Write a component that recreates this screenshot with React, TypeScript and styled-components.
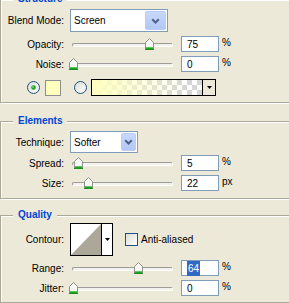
import React from 'react';
import styled, { createGlobalStyle } from 'styled-components';

const GlobalStyle = createGlobalStyle`
  html, body { margin: 0; padding: 0; background: #ECE9D8; overflow: hidden; }
  body { font-family: "Liberation Sans", Arial, sans-serif; font-size: 10px; color: #000; }
`;

const Page = styled.div`
  width: 300px;
  margin-top: -1px;
  display: flex;
  flex-direction: column;
`;

const Group = styled.section<{ $pt: number; $pb: number; $mt: number }>`
  position: relative;
  margin-top: ${p => p.$mt}px;
  border: 1px solid #ACA899;
  box-shadow: inset 1px 1px 0 #fff, 1px 1px 0 #fff;
  padding: ${p => p.$pt}px 0 ${p => p.$pb}px 0;
  display: flex;
  flex-direction: column;
`;

const Title = styled.div`
  position: absolute;
  top: -7px;
  left: 12px;
  padding: 0 5px;
  line-height: 12px;
  background: #ECE9D8;
  color: #0046D5;
  font-weight: bold;
  font-size: 10px;
`;

const Row = styled.div<{ $h: number; $mt?: number }>`
  display: flex;
  align-items: center;
  height: ${p => p.$h}px;
  margin-top: ${p => p.$mt ?? 0}px;
`;

const Label = styled.div`
  width: 63px;
  text-align: right;
  margin-right: 6px;
  white-space: nowrap;
`;

const Select = styled.div<{ $w: number; $h: number }>`
  box-sizing: border-box;
  width: ${p => p.$w}px;
  height: ${p => p.$h}px;
  border: 1px solid #7F9DB9;
  background: #fff;
  display: flex;
  align-items: center;
`;

const SelectText = styled.span`
  flex: 1;
  padding-left: 3px;
`;

const DropButton = styled.div<{ $w: number }>`
  box-sizing: border-box;
  width: ${p => p.$w}px;
  align-self: stretch;
  margin: 1px;
  border: 1px solid #B9CBF6;
  border-radius: 2px;
  background: linear-gradient(#C9D8FC, #B2C7F7);
  display: flex;
  align-items: center;
  justify-content: center;
`;

const SliderBox = styled.div`
  position: relative;
  width: 111px;
  height: 12px;
  margin-left: -1px;
`;

const Track = styled.div`
  position: absolute;
  left: 3px;
  width: 101px;
  top: 5px;
  height: 4px;
  box-sizing: border-box;
  border-top: 1px solid #9D9C98;
  border-left: 1px solid #9D9C98;
  border-bottom: 1px solid #fff;
  border-right: 1px solid #fff;
  border-radius: 2px;
  background: #F2F1EC;
`;

const Thumb = styled.svg`
  position: absolute;
  top: 0;
`;

const Field = styled.div`
  box-sizing: border-box;
  width: 38px;
  height: 16px;
  border: 1px solid #7F9DB9;
  background: #fff;
  padding-left: 5px;
  display: flex;
  align-items: center;
  margin-left: 1px;
`;

const Selected = styled.span`
  background: #316AC5;
  color: #fff;
  padding: 2px 1px;
`;

const Unit = styled.span`
  margin-left: 3px;
  margin-top: -3px;
`;

const RadioWrap = styled.svg<{ $ml: number }>`
  margin-left: ${p => p.$ml}px;
  flex: none;
`;

const Swatch = styled.div`
  box-sizing: border-box;
  width: 16px;
  height: 16px;
  margin-left: 5px;
  border: 1px solid #8E8E8E;
  background: #FFFFC0;
`;

const GradientPicker = styled.div`
  box-sizing: border-box;
  width: 125px;
  height: 17px;
  margin-left: 4px;
  border: 1px solid #000;
  display: flex;
`;

const GradientFill = styled.div`
  flex: 1;
  border-right: 1px solid #000;
  background:
    linear-gradient(to right, #FFFFC0 0%, rgba(255,255,192,0.6) 35%, rgba(255,255,192,0) 85%),
    repeating-conic-gradient(#D6D6D6 0 25%, #FFFFFF 0 50%) 0 0 / 10px 10px;
`;

const ArrowCell = styled.div`
  width: 12px;
  display: flex;
  align-items: center;
  justify-content: center;
`;

const ContourBox = styled.div`
  box-sizing: border-box;
  width: 43px;
  height: 33px;
  border: 1px solid #000;
  background: #fff;
  display: flex;
`;

const ContourPreview = styled.svg`
  border-right: 1px solid #000;
  flex: none;
`;

const Check = styled.div`
  box-sizing: border-box;
  width: 13px;
  height: 13px;
  margin-left: 12px;
  border: 1px solid #1C5180;
  background: linear-gradient(135deg, #DCDCD7, #FFFFFF);
`;

const CheckLabel = styled.span`
  margin-left: 3px;
`;

const ArrowDown = () => (
  <svg width="5" height="3" viewBox="0 0 5 3">
    <path d="M0 0H5L2.5 3Z" fill="#000" />
  </svg>
);

const Chevron = () => (
  <svg width="9" height="6" viewBox="0 0 9 6">
    <path d="M1.2 1.2L4.5 4.5L7.8 1.2" stroke="#4D6185" strokeWidth="2" fill="none" />
  </svg>
);

const Radio = ({ checked, ml }: { checked?: boolean; ml: number }) => (
  <RadioWrap $ml={ml} width="13" height="13" viewBox="0 0 13 13">
    <defs>
      <linearGradient id={checked ? 'rg1' : 'rg2'} x1="0" y1="0" x2="1" y2="1">
        <stop offset="0" stopColor="#DCDCD7" />
        <stop offset="1" stopColor="#FFFFFF" />
      </linearGradient>
    </defs>
    <circle cx="6.5" cy="6.5" r="6" fill={`url(#${checked ? 'rg1' : 'rg2'})`} stroke="#1C5180" strokeWidth="1" />
    {checked && <circle cx="6.5" cy="6.5" r="2.3" fill="#21A121" />}
    {checked && <circle cx="6" cy="6" r="0.9" fill="#6FE06F" />}
  </RadioWrap>
);

const Slider = ({ pct }: { pct: number }) => (
  <SliderBox>
    <Track />
    <Thumb width="9" height="12" viewBox="0 0 9 12" style={{ left: Math.round(pct * 1.01) }}>
      <path d="M0.5 4.5L4.5 0.5L8.5 4.5V11.5H0.5Z" fill="#F7F7F4" stroke="#8E8F8F" strokeWidth="1" />
      <rect x="1" y="9" width="7" height="1" fill="#5CC55C" />
      <rect x="1" y="10" width="7" height="1" fill="#21A121" />
      <rect x="0" y="11" width="9" height="1" fill="#1E8F1E" />
    </Thumb>
  </SliderBox>
);

const SliderRow = ({ label, pct, value, unit, selected }: { label: string; pct: number; value: string; unit: string; selected?: boolean }) => (
  <Row $h={20}>
    <Label>{label}</Label>
    <Slider pct={pct} />
    <Field>{selected ? <Selected>{value}</Selected> : value}</Field>
    <Unit>{unit}</Unit>
  </Row>
);

export default function App() {
  return (
    <>
      <GlobalStyle />
      <Page>
        <Group $mt={0} $pt={9} $pb={6}>
          <Title>Structure</Title>
          <Row $h={23}>
            <Label>Blend Mode:</Label>
            <Select $w={98} $h={23}>
              <SelectText>Screen</SelectText>
              <DropButton $w={21}><Chevron /></DropButton>
            </Select>
          </Row>
          <Row $h={2} />
          <SliderRow label="Opacity:" pct={75} value="75" unit="%" />
          <SliderRow label="Noise:" pct={0} value="0" unit="%" />
          <Row $h={17} $mt={5}>
            <Radio checked ml={26} />
            <Swatch />
            <Radio ml={13} />
            <GradientPicker>
              <GradientFill />
              <ArrowCell><ArrowDown /></ArrowCell>
            </GradientPicker>
          </Row>
        </Group>

        <Group $mt={18} $pt={9} $pb={5}>
          <Title>Elements</Title>
          <Row $h={22}>
            <Label>Technique:</Label>
            <Select $w={68} $h={22}>
              <SelectText>Softer</SelectText>
              <DropButton $w={15}><Chevron /></DropButton>
            </Select>
          </Row>
          <SliderRow label="Spread:" pct={5} value="5" unit="%" />
          <SliderRow label="Size:" pct={14.5} value="22" unit="px" />
        </Group>

        <Group $mt={16} $pt={7} $pb={4}>
          <Title>Quality</Title>
          <Row $h={33}>
            <Label>Contour:</Label>
            <ContourBox>
              <ContourPreview width="30" height="31" viewBox="0 0 30 31">
                <rect width="30" height="31" fill="#fff" />
                <path d="M30 0V31H0Z" fill="#ACA899" />
              </ContourPreview>
              <ArrowCell><ArrowDown /></ArrowCell>
            </ContourBox>
            <Check />
            <CheckLabel>Anti-aliased</CheckLabel>
          </Row>
          <Row $h={2} />
          <SliderRow label="Range:" pct={64} value="64" unit="%" selected />
          <SliderRow label="Jitter:" pct={0} value="0" unit="%" />
        </Group>
      </Page>
    </>
  );
}
